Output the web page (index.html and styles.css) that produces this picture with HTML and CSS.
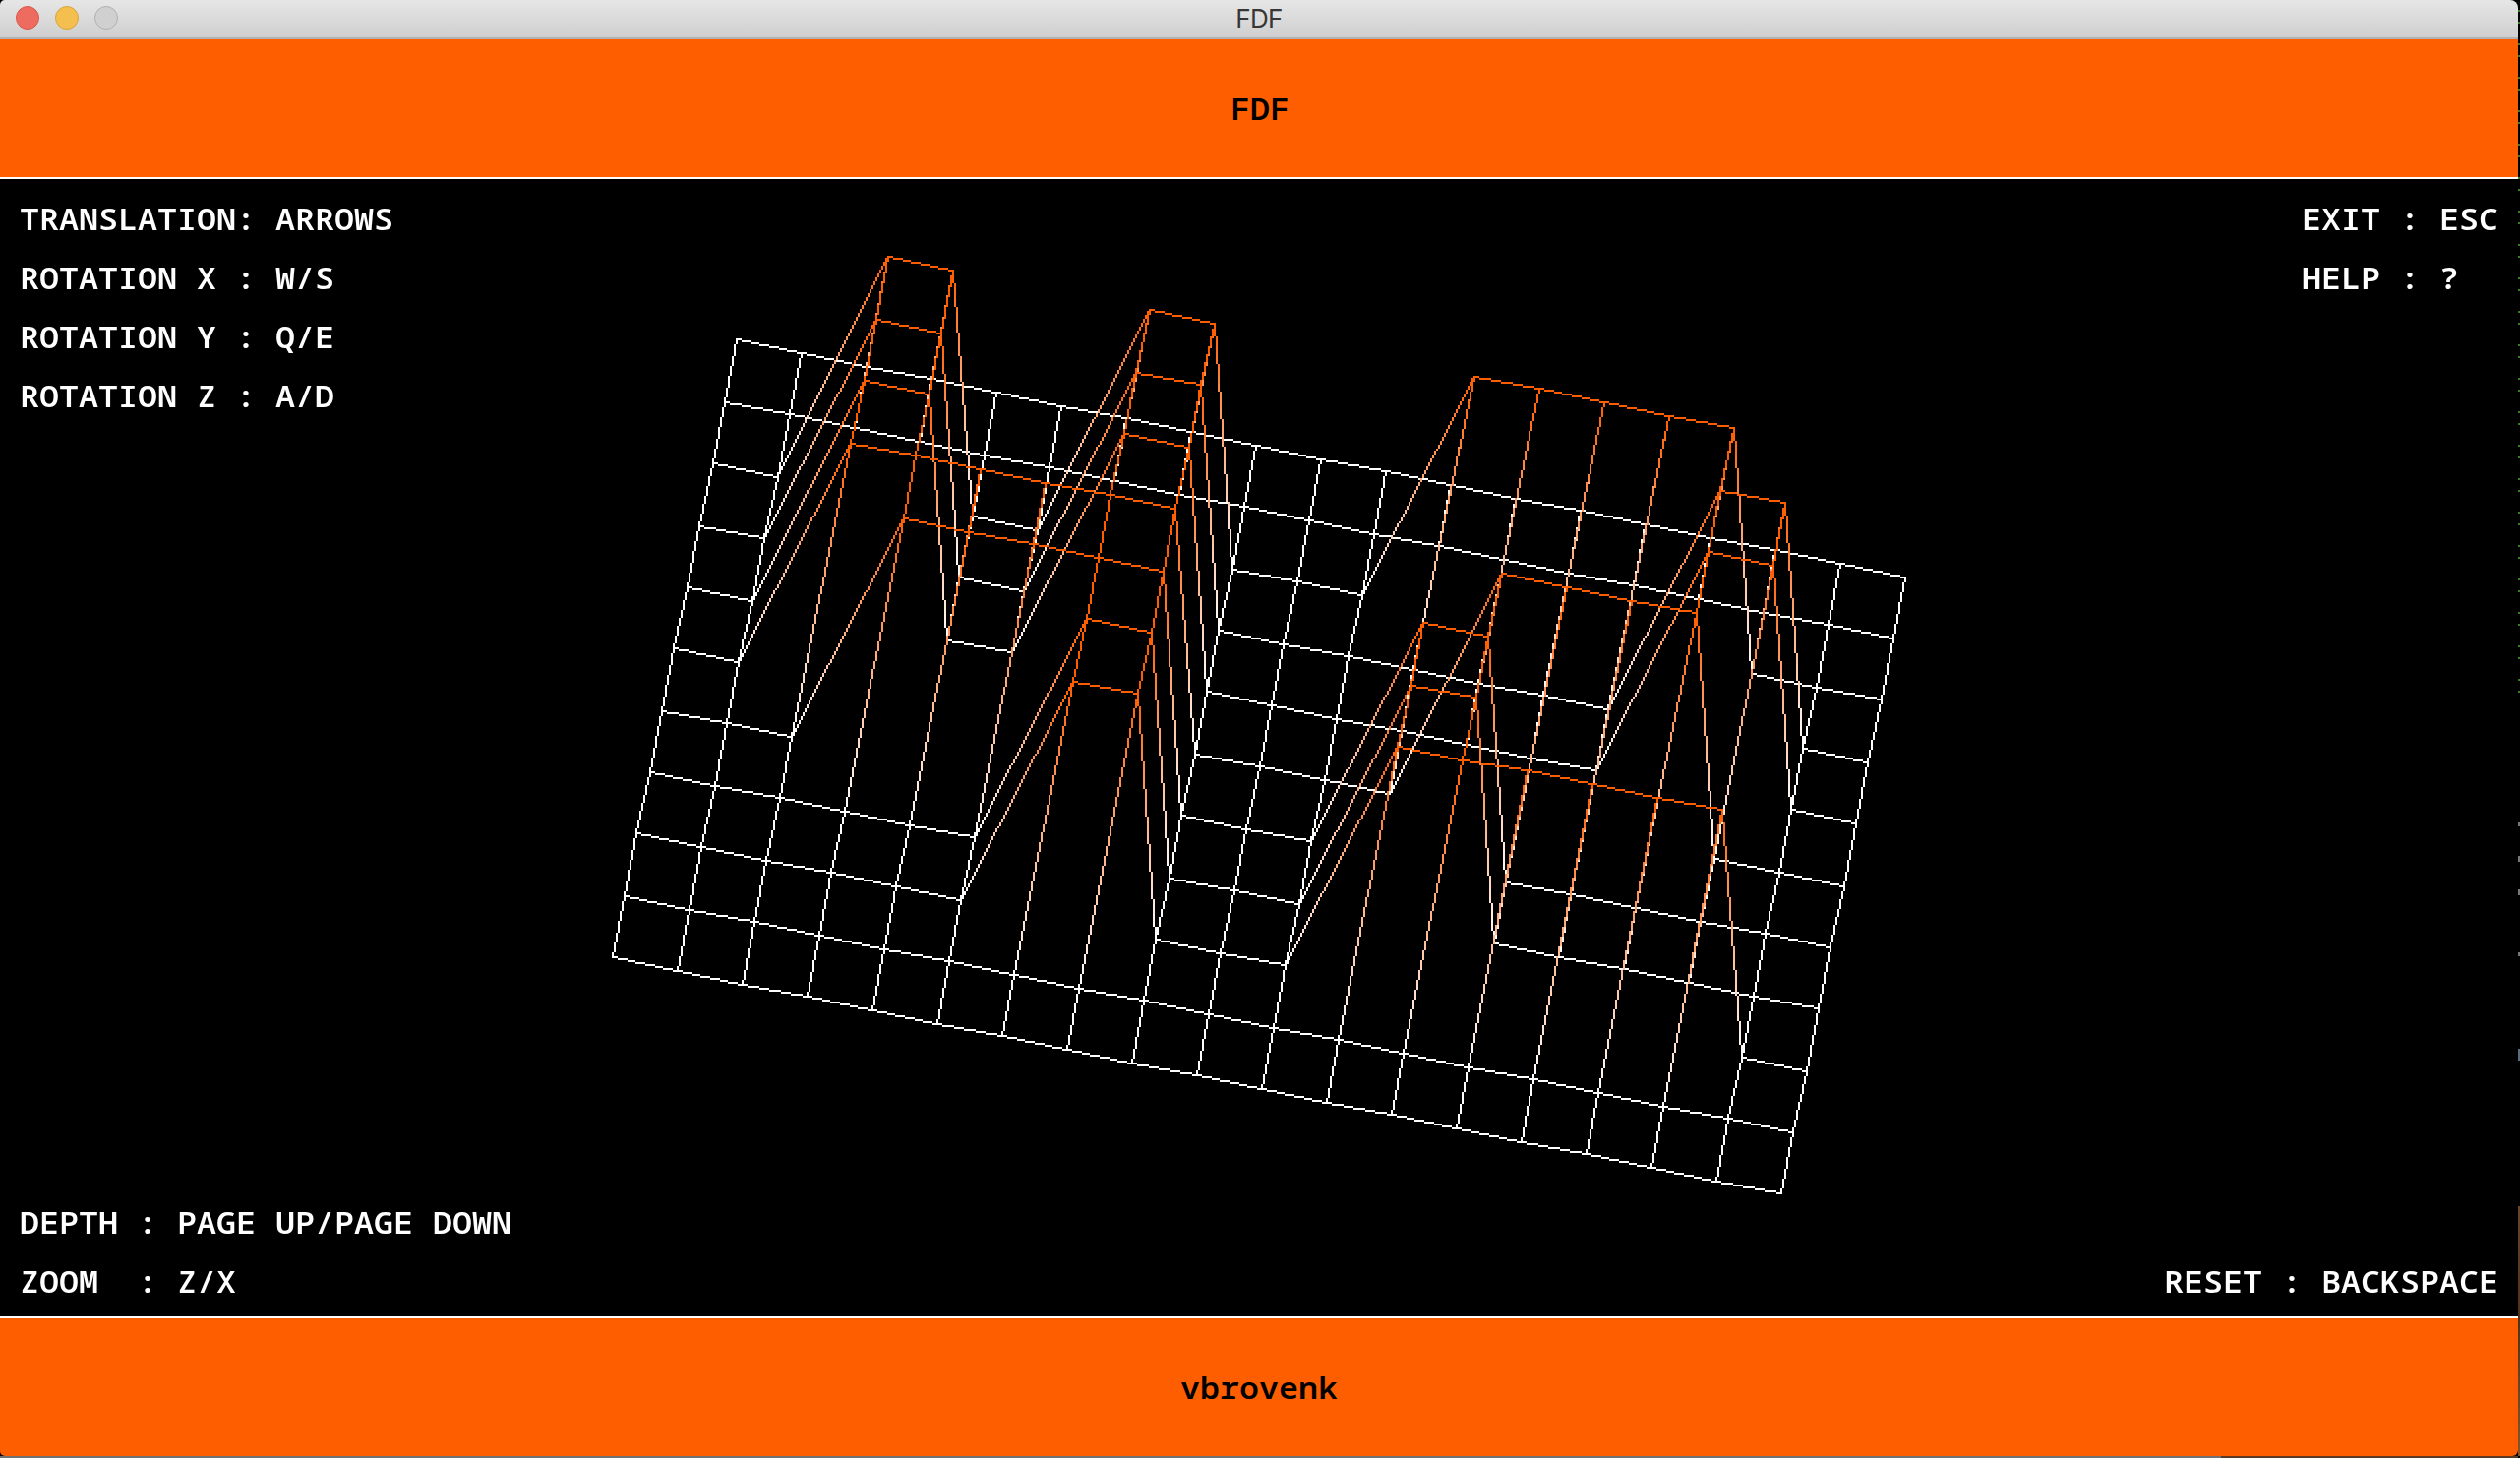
FILE: index.html
```html
<!DOCTYPE html>
<html lang="en">
<head>
<meta charset="utf-8">
<title>FDF</title>
<link rel="stylesheet" href="styles.css">
</head>
<body>
<div class="window">
  <header class="titlebar">
    <div class="lights"><i class="light close"></i><i class="light minimize"></i><i class="light zoom"></i></div>
    <span class="title">FDF</span>
  </header>
  <section class="banner top"><h1 class="banner-text">FDF</h1></section>
  <main class="viewport">
    <canvas class="wireframe" id="wireframe" width="1280" height="578"></canvas>
    <div class="row">
      <pre class="help">TRANSLATION: ARROWS
ROTATION X : W/S
ROTATION Y : Q/E
ROTATION Z : A/D</pre>
      <pre class="help">EXIT : ESC
HELP : ?</pre>
    </div>
    <div class="row end">
      <pre class="help">DEPTH : PAGE UP/PAGE DOWN
ZOOM  : Z/X</pre>
      <pre class="help">RESET : BACKSPACE</pre>
    </div>
  </main>
  <section class="banner bottom"><p class="banner-text author">vbrovenk</p></section>
</div>
<div class="desktop-right"></div>
<div class="desktop-bottom"></div>
<script src="wireframe.js"></script>
</body>
</html>
```
FILE: styles.css
```css
* { box-sizing: border-box; }
body {
  margin: 0;
  width: 2562px;
  height: 1482px;
  overflow: hidden;
  background: #000;
  display: grid;
  grid-template: 1480px 2px / 2560px 2px;
}
.window {
  display: flex;
  flex-direction: column;
  overflow: hidden;
  border-radius: 5px 8px 6px 5px;
}
.titlebar {
  height: 40px;
  flex: none;
  display: grid;
  grid-template-columns: 1fr auto 1fr;
  align-items: center;
  padding: 0 16px;
  background: linear-gradient(#e6e6e6, #cfcfcf);
  border-bottom: 2px solid #b2b2b2;
}
.lights { display: flex; gap: 16px; padding-bottom: 2px; }
.light { width: 24px; height: 24px; border-radius: 50%; border: 1px solid; }
.close { background: #ed6b5f; border-color: #d9574c; }
.minimize { background: #f5bf4f; border-color: #d9a43c; }
.zoom { background: #d0d0d0; border-color: #b0b0b0; }
.title {
  font: 26px/36px Inter, sans-serif;
  color: #363636;
  letter-spacing: -0.6px;
}
.banner {
  height: 142px;
  flex: none;
  background: #ff5e00;
  display: flex;
  align-items: center;
  justify-content: center;
}
.top { border-bottom: 2px solid #fff; }
.bottom { border-top: 2px solid #fff; }
.banner-text, .help {
  margin: 0;
  font: 600 33.33px/65px "Noto Sans Mono", "DejaVu Sans Mono", monospace;
  transform: scaleY(0.923);
  transform-origin: top;
}
.banner-text { color: #000; transform-origin: center; padding-left: 2px; }
.author { padding-left: 0; }
.viewport {
  flex: 1;
  position: relative;
  display: flex;
  flex-direction: column;
  justify-content: space-between;
  padding: 10px 20px 6px;
  background: #000;
}
.wireframe {
  position: absolute;
  inset: 0;
  width: 2560px;
  height: 1156px;
  image-rendering: pixelated;
}
.row { display: flex; justify-content: space-between; align-items: flex-start; position: relative; }
.end { align-items: flex-end; }
.help { color: #fff; }
.end .help { transform-origin: bottom; }
.desktop-right {
  background:
    linear-gradient(transparent 0 704px, #000 704px 836px, #777 836px 840px, #000 840px 870px, #777 870px 876px, #000 876px 904px, #777 904px 910px, #000 910px 968px, #777 968px 972px, #000 972px 1066px, #5b6b7c 1066px 1078px, #000 1078px 1226px, #6a4528 1226px, #4e301c 1340px, #85562c),
    repeating-linear-gradient(#000 0 10px, #3f7a2c 10px 12px, #000 12px 22px, #3f7a2c 22px 24px, #000 24px 34px);
}
.desktop-bottom { background: linear-gradient(90deg, #6f7173 0 2258px, #5a3a22 2258px); }
```
FILE: wireframe.js
```js
const heights = [
  '0000000000000000000',
  '0000000000000000000',
  '0011001100011111000',
  '0011001100000001100',
  '0011001100000001100',
  '0011111100001111000',
  '0001111100011000000',
  '0000001100011000000',
  '0000001100011111100',
  '0000000000000000000',
  '0000000000000000000'
].map(line => [...line].map(Number));

const ctx = document.getElementById('wireframe').getContext('2d');

function project(col, row) {
  const z = heights[row][col];
  return {
    x: Math.floor(374.7 + 33.005 * col - 6.345 * row + 23.97 * z),
    y: z
      ? 298 + Math.trunc(6.67 * (col - 9) + 31.43 * (row - 5) - 118.04)
      : Math.floor(81.9 + 6.68 * col + 31.38 * row),
    z
  };
}

// Bresenham line, colour interpolated between the two end heights
function line(a, b) {
  const dx = Math.abs(b.x - a.x), dy = Math.abs(b.y - a.y);
  const sx = a.x < b.x ? 1 : -1, sy = a.y < b.y ? 1 : -1;
  const length = Math.max(dx, dy);
  let err = dx - dy, x = a.x, y = a.y;
  for (let i = 0; i <= length; i++) {
    const z = a.z + (b.z - a.z) * i / length;
    ctx.fillStyle = `rgb(255, ${Math.round(255 - 161 * z)}, ${Math.round(255 - 255 * z)})`;
    ctx.fillRect(x, y, 1, 1);
    const e = err * 2;
    if (e > -dy) { err -= dy; x += sx; }
    if (e < dx) { err += dx; y += sy; }
  }
}

for (let row = 0; row < 11; row++) {
  for (let col = 0; col < 19; col++) {
    const p = project(col, row);
    if (col < 18) line(p, project(col + 1, row));
    if (row < 10) line(p, project(col, row + 1));
  }
}
```
